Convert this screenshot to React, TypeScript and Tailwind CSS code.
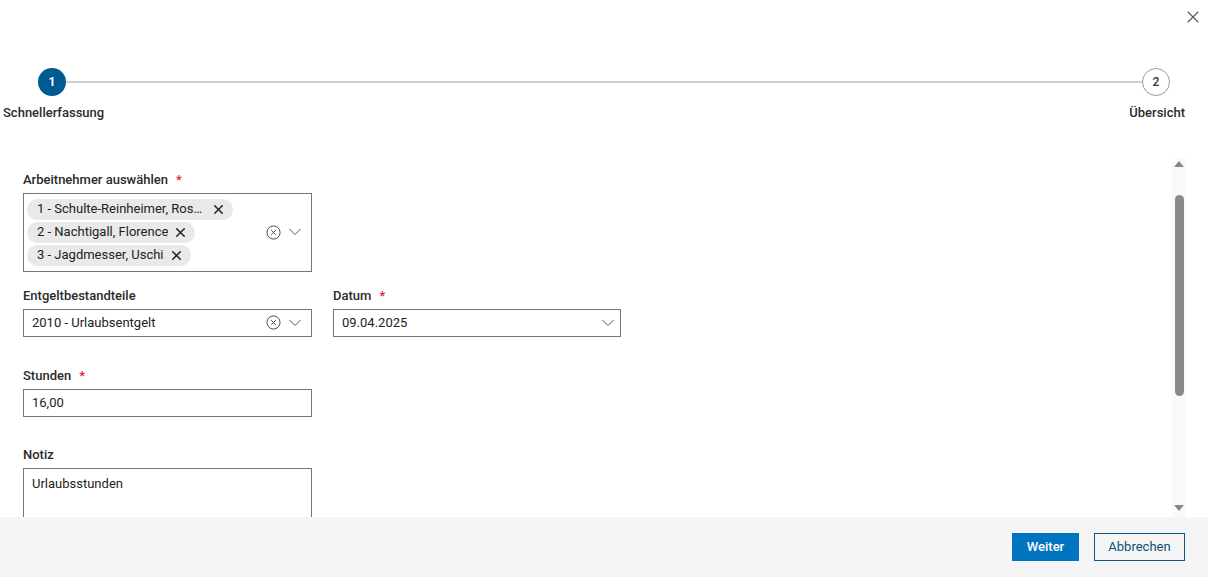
import { X } from "lucide-react";

const font = { fontFamily: 'Roboto, "Noto Sans", sans-serif' };

function ClearIcon() {
  return (
    <svg width="15" height="15" viewBox="0 0 16 16" fill="none" stroke="#444" strokeWidth="1">
      <circle cx="8" cy="8" r="7" />
      <path d="M5.5 5.5l5 5M10.5 5.5l-5 5" />
    </svg>
  );
}

function Chevron() {
  return (
    <svg width="12" height="8" viewBox="0 0 12 8" fill="none" stroke="#555" strokeWidth="1">
      <path d="M0.5 1l5.5 5.5L11.5 1" />
    </svg>
  );
}

function Chip({ label }: { label: string }) {
  return (
    <div className="flex h-[21px] max-w-[206px] items-center gap-[5px] rounded-full bg-[#e9e9e9] pl-[10px] pr-[7px] text-[13px] text-[#222]">
      <span className="truncate">{label}</span>
      <X size={15} strokeWidth={2.4} className="shrink-0 text-[#222]" />
    </div>
  );
}

function Label({ text, required }: { text: string; required?: boolean }) {
  return (
    <div className="mb-[5px] flex h-[16px] items-center gap-[8px] text-[13px] font-medium text-[#2b2b2b]">
      {text}
      {required && <span className="text-[#e0202f]">*</span>}
    </div>
  );
}

export default function App() {
  return (
    <div className="flex h-[577px] w-[1208px] flex-col overflow-hidden bg-white" style={font}>
      {/* header with close */}
      <div className="flex h-[35px] items-start justify-end pr-[5px] pt-[7px]">
        <X size={20} strokeWidth={1.3} className="text-[#555]" />
      </div>

      {/* stepper */}
      <div className="px-[3px] pt-[33px]">
        <div className="flex items-center px-[35px]">
          <div className="flex h-[28px] w-[28px] shrink-0 items-center justify-center rounded-full bg-[#005a92] text-[12px] font-bold text-white">
            1
          </div>
          <div className="h-[2px] flex-1 bg-[#cfcfcf]" />
          <div className="flex h-[28px] w-[28px] shrink-0 items-center justify-center rounded-full border border-[#9a9a9a] bg-white text-[12px] font-medium text-[#333]">
            2
          </div>
        </div>
        <div className="mt-[7px] flex justify-between pr-[20px] text-[13px] font-medium text-[#2b2b2b]">
          <span>Schnellerfassung</span>
          <span>Übersicht</span>
        </div>
      </div>

      {/* content */}
      <div className="mt-[35px] flex min-h-0 flex-1">
        <div className="flex-1 overflow-hidden pl-[23px] pt-[14px]">
          <Label text="Arbeitnehmer auswählen" required />
          <div className="flex h-[79px] w-[289px] items-center border border-[#767676] pl-[3px] pr-[10px]">
            <div className="flex flex-1 flex-col gap-[2px]">
              <Chip label="1 - Schulte-Reinheimer, Rosemarie" />
              <div className="flex"><Chip label="2 - Nachtigall, Florence" /></div>
              <div className="flex"><Chip label="3 - Jagdmesser, Uschi" /></div>
            </div>
            <div className="flex items-center gap-[8px]">
              <ClearIcon />
              <Chevron />
            </div>
          </div>

          <div className="mt-[16px] flex gap-[21px]">
            <div>
              <Label text="Entgeltbestandteile" />
              <div className="flex h-[28px] w-[289px] items-center border border-[#767676] pl-[8px] pr-[10px] text-[13px] text-[#222]">
                <span className="flex-1">2010 - Urlaubsentgelt</span>
                <div className="flex items-center gap-[8px]">
                  <ClearIcon />
                  <Chevron />
                </div>
              </div>
            </div>
            <div>
              <Label text="Datum" required />
              <div className="flex h-[28px] w-[288px] items-center border border-[#767676] pl-[8px] pr-[6px] text-[13px] text-[#222]">
                <span className="flex-1">09.04.2025</span>
                <Chevron />
              </div>
            </div>
          </div>

          <div className="mt-[31px]">
            <Label text="Stunden" required />
            <div className="flex h-[28px] w-[289px] items-center border border-[#767676] pl-[8px] text-[13px] text-[#222]">
              16,00
            </div>
          </div>

          <div className="mt-[30px]">
            <Label text="Notiz" />
            <div className="h-[80px] w-[289px] border border-[#767676] px-[8px] pt-[5px] text-[13px] text-[#222]">
              Urlaubsstunden
            </div>
          </div>
        </div>

        {/* scrollbar */}
        <div className="mr-[22px] flex w-[14px] flex-col items-center bg-[#fafafa] pb-[6px] pt-[3px]">
          <div className="h-0 w-0 border-x-[5px] border-b-[6px] border-x-transparent border-b-[#888]" />
          <div className="mt-[28px] h-[201px] w-[9px] rounded-full bg-[#8a8a8a]" />
          <div className="flex-1" />
          <div className="h-0 w-0 border-x-[5px] border-t-[6px] border-x-transparent border-t-[#888]" />
        </div>
      </div>

      {/* footer */}
      <div className="flex h-[60px] shrink-0 items-center justify-end gap-[15px] bg-[#f5f5f5] pr-[23px]">
        <button className="h-[28px] w-[67px] bg-[#0074c0] text-[13px] font-medium text-white">
          Weiter
        </button>
        <button className="h-[28px] w-[91px] border border-[#0c5a8c] bg-transparent text-[13px] text-[#0c4f7a]">
          Abbrechen
        </button>
      </div>
    </div>
  );
}
